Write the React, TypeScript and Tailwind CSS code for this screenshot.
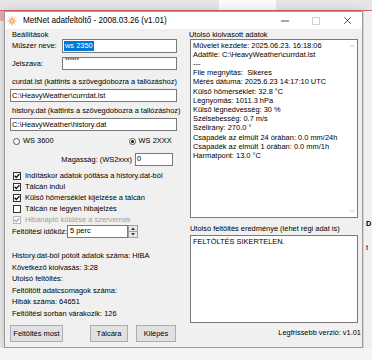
import React from 'react';

const font = "font-['Liberation_Sans',Arial,sans-serif]";

const Box = ({ on, disabled }: { on: boolean; disabled?: boolean }) => (
  <span
    className={`flex h-[8px] w-[8px] shrink-0 items-center justify-center border bg-white ${
      disabled ? 'border-[#b5b5b5]' : 'border-[#333333]'
    }`}
  >
    {on && (
      <svg width="6" height="6" viewBox="0 0 6 6">
        <path d="M0.6 2.7 L2.3 4.5 L5.4 1.1" fill="none" stroke={disabled ? '#a8a8a8' : '#111'} strokeWidth="1.4" />
      </svg>
    )}
  </span>
);

const Radio = ({ on }: { on: boolean }) => (
  <span className="flex h-[7px] w-[7px] shrink-0 items-center justify-center rounded-full border border-[#555] bg-white">
    {on && <span className="h-[3px] w-[3px] rounded-full bg-[#111]" />}
  </span>
);

const Btn = ({ children, w }: { children: React.ReactNode; w: string }) => (
  <div className={`flex h-[17px] items-center justify-center border border-[#adadad] bg-[#e1e1e1] ${w}`}>
    {children}
  </div>
);

const readings = [
  'Művelet kezdete: 2025.06.23. 16:18:06',
  'Adatfile: C:\\HeavyWeather\\currdat.lst',
  '---',
  'File megnyitás:  Sikeres',
  'Mérés dátuma: 2025.6.23 14:17:10 UTC',
  'Külső hőmérséklet: 32.8 °C',
  'Légnyomás: 1011.3 hPa',
  'Külső légnedvesség: 30 %',
  'Szélsebesség: 0.7 m/s',
  'Szélirány: 270.0 °',
  'Csapadék az elmúlt 24 órában: 0.0 mm/24h',
  'Csapadék az elmúlt 1 órában: 0.0 mm/1h',
  'Harmatpont: 13.0 °C',
];

const options = [
  { label: 'Indításkor adatok pótlása a history.dat-ból', on: true },
  { label: 'Tálcán indul', on: true },
  { label: 'Külső hőmérséklet kijelzése a tálcán', on: true },
  { label: 'Tálcán ne legyen hibajelzés', on: false },
  { label: 'Hibanapló küldése a szervernek', on: true, disabled: true },
];

const status = [
  'History.dat-ból pótolt adatok száma: HIBA',
  'Következő kiolvasás: 3:28',
  'Utolsó feltöltés:',
  'Feltöltött adatcsomagok száma:',
  'Hibák száma: 64651',
  'Feltöltési sorban várakozik: 126',
];

export default function App() {
  return (
    <div className={`flex h-[360px] w-[372px] flex-col overflow-hidden bg-[#f0f0f0] text-[7.45px] text-black ${font}`}>
      {/* taskbar-ish strip behind */}
      <div className="flex h-[10px] shrink-0">
        <div className="w-[219px] bg-[#e6e6e6]" />
        <div className="w-[57px] bg-[#fafafa]" />
        <div className="flex-1 bg-[#e6e6e6]" />
      </div>
      <div className="h-px shrink-0 bg-[#d86464]" />

      <div className="flex h-[337px] shrink-0">
        {/* sliver of window behind, left */}
        <div className="flex w-[4px] flex-col overflow-hidden bg-[#f0f0f0]">
          <div className="h-[10px] bg-[#e9b0b0]" />
        </div>

        {/* main window */}
        <div className="flex w-[359px] flex-col border border-[#9c9c9c] bg-[#f0f0f0] shadow-[0_2px_10px_rgba(0,0,0,0.25)]">
          {/* title bar */}
          <div className="flex h-[17px] shrink-0 items-center bg-white pl-[2px]">
            <svg width="10" height="10" viewBox="0 0 10 10">
              <g stroke="#f0a040" strokeWidth="0.9">
                <line x1="5" y1="0.3" x2="5" y2="2" />
                <line x1="5" y1="8" x2="5" y2="9.7" />
                <line x1="0.3" y1="5" x2="2" y2="5" />
                <line x1="8" y1="5" x2="9.7" y2="5" />
                <line x1="1.7" y1="1.7" x2="2.8" y2="2.8" />
                <line x1="7.2" y1="7.2" x2="8.3" y2="8.3" />
                <line x1="8.3" y1="1.7" x2="7.2" y2="2.8" />
                <line x1="1.7" y1="8.3" x2="2.8" y2="7.2" />
              </g>
              <circle cx="5" cy="5" r="2.3" fill="#fbd7a0" stroke="#e8902a" strokeWidth="0.9" />
            </svg>
            <span className="ml-[6px] text-[8.15px] leading-[10px]">MetNet adatfeltöltő - 2008.03.26 (v1.01)</span>
            <div className="ml-auto flex items-center">
              <svg width="8" height="8" viewBox="0 0 8 8" className="mr-[23px]">
                <line x1="0" y1="4" x2="8" y2="4" stroke="#222" strokeWidth="0.8" />
              </svg>
              <svg width="8" height="8" viewBox="0 0 8 8" className="mr-[24px]">
                <rect x="0.5" y="0.5" width="7" height="7" fill="none" stroke="#c8c8c8" strokeWidth="0.8" />
              </svg>
              <svg width="7" height="7" viewBox="0 0 7 7" className="mr-[11px]">
                <path d="M0.3 0.3 L6.7 6.7 M6.7 0.3 L0.3 6.7" stroke="#222" strokeWidth="0.8" />
              </svg>
            </div>
          </div>

          {/* body */}
          <div className="flex flex-1">
            {/* left column */}
            <div className="flex w-[181px] flex-col">
              <div className="mt-[1px] h-[9px] pl-[7px] leading-[9px]">Beállítások</div>

              <div className="flex h-[14px] items-center">
                <span className="w-[57px] whitespace-nowrap pl-[7px]">Műszer neve:</span>
                <div className="flex h-[14px] w-[115px] items-center border border-[#7a7a7a] bg-white pl-[1px]">
                  <span className="bg-[#0078d7] px-[1px] leading-[10px] text-white">ws 2350</span>
                </div>
              </div>

              <div className="mt-[4px] flex h-[13px] items-center">
                <span className="w-[57px] pl-[7px]">Jelszava:</span>
                <div className="h-[13px] w-[115px] border border-[#7a7a7a] bg-white pl-[2px] text-[6px] leading-[5px]">
                  ******
                </div>
              </div>

              <div className="mt-[7px] h-[10px] whitespace-nowrap pl-[7px] leading-[10px]">curdat.lst (kattints a szövegdobozra a tallózáshoz)</div>
              <div className="ml-[5px] mt-[2px] flex h-[13px] w-[167px] items-center border border-[#7a7a7a] bg-white pl-[1px]">
                C:\HeavyWeather\currdat.lst
              </div>

              <div className="mt-[4px] h-[10px] whitespace-nowrap pl-[7px] leading-[10px]">history.dat (kattints a szövegdobozra a tallózáshoz)</div>
              <div className="ml-[5px] mt-[2px] flex h-[13px] w-[167px] items-center border border-[#7a7a7a] bg-white pl-[1px]">
                C:\HeavyWeather\history.dat
              </div>

              <div className="mt-[5px] flex h-[10px] items-center pl-[8px]">
                <Radio on={false} />
                <span className="ml-[3px]">WS 3600</span>
                <span className="ml-[75px]">
                  <Radio on />
                </span>
                <span className="ml-[3px]">WS 2XXX</span>
              </div>

              <div className="mt-[7px] flex h-[13px] items-center justify-end pr-[13px]">
                <span>Magasság: (WS2xxx)</span>
                <div className="ml-[3px] h-[13px] w-[38px] border border-[#7a7a7a] bg-white pl-[1px] leading-[10px]">0</div>
              </div>

              <div className="mt-[4px] flex flex-col">
                {options.map((o) => (
                  <div key={o.label} className="flex h-[11px] items-center pl-[8px]">
                    <Box on={o.on} disabled={o.disabled} />
                    <span className={`ml-[4px] whitespace-nowrap ${o.disabled ? 'text-[#a0a0a0]' : ''}`}>{o.label}</span>
                  </div>
                ))}
              </div>

              <div className="flex h-[13px] items-center">
                <span className="w-[62px] shrink-0 whitespace-nowrap pl-[7px]">Feltöltési időköz:</span>
                <div className="h-[13px] w-[61px] border border-[#7a7a7a] bg-white pl-[2px] leading-[10px]">5 perc</div>
                <div className="flex h-[13px] w-[10px] flex-col">
                  <div className="flex h-[6.5px] items-center justify-center border border-[#a0a0a0] bg-[#e8e8e8]">
                    <svg width="4" height="3" viewBox="0 0 4 3"><path d="M0 3 L2 0.5 L4 3 Z" fill="#333" /></svg>
                  </div>
                  <div className="flex h-[6.5px] items-center justify-center border border-t-0 border-[#a0a0a0] bg-[#e8e8e8]">
                    <svg width="4" height="3" viewBox="0 0 4 3"><path d="M0 0 L2 2.5 L4 0 Z" fill="#333" /></svg>
                  </div>
                </div>
              </div>

              <div className="mt-[12px] flex flex-col whitespace-nowrap pl-[7px] leading-[11.6px]">
                {status.map((s) => (
                  <div key={s}>{s}</div>
                ))}
              </div>

              <div className="ml-[5px] mt-[5.4px] flex">
                <Btn w="w-[53px]">Feltöltés most</Btn>
                <div className="ml-[27px]">
                  <Btn w="w-[38px]">Tálcára</Btn>
                </div>
                <div className="ml-[8px]">
                  <Btn w="w-[40px]">Kilépés</Btn>
                </div>
              </div>
            </div>

            {/* right column */}
            <div className="flex flex-1 flex-col">
              <div className="mt-[1px] h-[9px] pl-[3px] leading-[9px]">Utolsó kiolvasott adatok</div>
              <div className="ml-[4px] flex h-[179px] w-[168px] border border-[#7a7a7a] bg-white">
                <div className="flex-1 pl-[2px] pt-[0.5px] leading-[9.2px]">
                  {readings.map((r, i) => (
                    <div key={i} className="whitespace-pre">{r}</div>
                  ))}
                </div>
                <div className="flex w-[10px] flex-col items-center justify-between py-[4px]">
                  <svg width="6" height="4" viewBox="0 0 6 4"><path d="M0.5 3.5 L3 1 L5.5 3.5" fill="none" stroke="#c0c0c0" strokeWidth="0.8" /></svg>
                  <svg width="6" height="4" viewBox="0 0 6 4"><path d="M0.5 0.5 L3 3 L5.5 0.5" fill="none" stroke="#c0c0c0" strokeWidth="0.8" /></svg>
                </div>
              </div>

              <div className="mt-[6px] h-[10px] whitespace-nowrap pl-[4px] leading-[10px]">Utolsó feltöltés eredménye (lehet régi adat is)</div>
              <div className="ml-[4px] mt-[1px] h-[88px] w-[168px] border border-[#7a7a7a] bg-white pl-[2px] pt-[1px] leading-[9.2px]">
                FELTÖLTÉS SIKERTELEN.
              </div>

              <div className="mt-[5px] h-[10px] pr-[1px] text-right leading-[10px]">Legfrissebb verzió: v1.01</div>
            </div>
          </div>
        </div>

        {/* sliver of window behind, right */}
        <div className="flex w-[9px] flex-col overflow-hidden border-l border-[#d4d4d4] bg-[#f0f0f0] pl-[2px]">
          <div className="mt-[208px] font-bold leading-[9px]">D</div>
          <div className="mt-[15px] leading-[9px]">t</div>
        </div>
      </div>

      <div className="flex-1 bg-[#f4f4f4]" />
    </div>
  );
}
